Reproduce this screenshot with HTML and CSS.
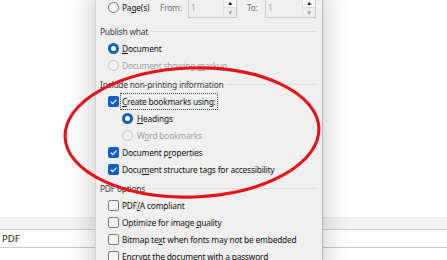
FILE: index.html
```html
<!DOCTYPE html>
<html>
<head>
<meta charset="utf-8">
<link rel="stylesheet" href="styles.css">
</head>
<body>
<div class="page">
  <div class="backdrop">
    <div class="spacer"></div>
    <div class="band"></div>
    <div class="field"><span class="field-text">PDF</span></div>
  </div>

  <div class="dialog">
    <div class="range-row">
      <div class="range-cell">
        <span class="radio"></span><span class="lbl">Pa<u>g</u>e(s)</span>
      </div>
      <span class="range-lbl from">From:</span>
      <div class="spin">
        <span class="spin-val">1</span>
        <span class="spin-btns"><span class="up">&#9650;</span><span class="down">&#9660;</span></span>
      </div>
      <span class="range-lbl to">To:</span>
      <div class="spin wide">
        <span class="spin-val">1</span>
        <span class="spin-btns"><span class="up">&#9650;</span><span class="down">&#9660;</span></span>
      </div>
    </div>

    <div class="group-head first"><span>Publish what</span><span class="rule"></span></div>
    <div class="item"><span class="radio on"></span><span class="lbl"><u>D</u>ocument</span></div>
    <div class="item disabled"><span class="radio off"></span><span class="lbl">Document showing <u>m</u>arkup</span></div>

    <div class="group-head"><span>Include non-printing information</span><span class="rule"></span></div>
    <div class="item"><span class="check on"><svg viewBox="0 0 11 11" width="11" height="11"><path d="M2.6 5.6 L4.6 7.6 L8.5 3.6" fill="none" stroke="#fff" stroke-width="1.1"/></svg></span><span class="lbl focus"><u>C</u>reate bookmarks using:</span></div>
    <div class="item sub"><span class="radio on"></span><span class="lbl"><u>H</u>eadings</span></div>
    <div class="item sub disabled"><span class="radio off"></span><span class="lbl">W<u>o</u>rd bookmarks</span></div>
    <div class="item"><span class="check on"><svg viewBox="0 0 11 11" width="11" height="11"><path d="M2.6 5.6 L4.6 7.6 L8.5 3.6" fill="none" stroke="#fff" stroke-width="1.1"/></svg></span><span class="lbl">Document p<u>r</u>operties</span></div>
    <div class="item"><span class="check on"><svg viewBox="0 0 11 11" width="11" height="11"><path d="M2.6 5.6 L4.6 7.6 L8.5 3.6" fill="none" stroke="#fff" stroke-width="1.1"/></svg></span><span class="lbl">Docu<u>m</u>ent structure tags for accessibility</span></div>

    <div class="group-head"><span>PDF options</span><span class="rule"></span></div>
    <div class="item"><span class="check"></span><span class="lbl">PDF<u>/</u>A compliant</span></div>
    <div class="item"><span class="check"></span><span class="lbl">Optimize for image <u>q</u>uality</span></div>
    <div class="item"><span class="check"></span><span class="lbl">Bitmap te<u>x</u>t when fonts may not be embedded</span></div>
    <div class="item"><span class="check"></span><span class="lbl">E<u>n</u>crypt the document with a password</span></div>
  </div>

  <svg class="annot" width="447" height="260" viewBox="0 0 447 260">
    <ellipse cx="192" cy="132.5" rx="127" ry="64.5" transform="rotate(-2 192 132.5)" fill="none" stroke="#e3131b" stroke-width="3.1"/>
  </svg>
</div>
</body>
</html>
```

FILE: styles.css
```css
* { box-sizing: border-box; }
html, body { margin: 0; padding: 0; background: #fff; }
body {
  font-family: "Noto Sans", "Open Sans", sans-serif;
  font-size: 8.4px;
  letter-spacing: -0.2px;
  color: #111;
}
.page {
  position: relative;
  width: 447px;
  height: 260px;
  overflow: hidden;
  background: #fff;
}
.backdrop { display: flex; flex-direction: column; }
.spacer { height: 217px; }
.band {
  height: 13px;
  background: #f4f4f4;
  border-top: 1px solid #ececec;
  border-bottom: 1px solid #d0d0d0;
}
.field {
  height: 18px;
  background: #fff;
  border-bottom: 1px solid #c6c6c6;
  display: flex;
  align-items: center;
  padding-left: 2px;
}
.field-text { font-size: 9.5px; letter-spacing: 0; color: #222; }

.dialog {
  position: absolute;
  left: 95px;
  top: -4px;
  width: 228px;
  height: 280px;
  background: #f0f0f0;
  border-left: 1px solid #d2d2d2;
  border-right: 1px solid #b4b4b4;
  box-shadow: 0 0 22px 5px rgba(0,0,0,0.17);
  padding-left: 4px;
  padding-right: 6px;
  display: flex;
  flex-direction: column;
}
.range-row {
  height: 22px;
  display: flex;
  align-items: center;
}
.range-cell {
  width: 60px;
  display: flex;
  align-items: center;
  padding-left: 8px;
}
.range-lbl { color: #6e6e6e; }
.from { width: 28px; }
.to { width: 18px; margin-left: 10px; }
.spin {
  width: 49px;
  height: 21px;
  border: 1px solid #cbcbcb;
  background: #f0f0f0;
  display: flex;
  align-items: center;
  justify-content: space-between;
  padding-left: 2px;
  margin-top: 1px;
}
.spin.wide { width: 51px; }
.spin-val { color: #a8a8a8; }
.spin-btns {
  width: 13px;
  height: 19px;
  display: flex;
  flex-direction: column;
  border-left: 1px solid #e4e4e4;
}
.spin-btns span {
  flex: 1;
  display: flex;
  align-items: center;
  justify-content: center;
  font-size: 6px;
  line-height: 1;
}
.up { background: #fbfbfb; color: #111; border-bottom: 1px solid #dcdcdc; }
.down { background: #ededed; color: #9a9a9a; }

.group-head {
  height: 17px;
  margin-top: 2px;
  display: flex;
  align-items: center;
  gap: 3px;
  color: #3a3a3a;
}
.group-head.first { margin-top: 5px; }
.rule { flex: 1; height: 1px; background: #dedede; }

.item {
  height: 17px;
  display: flex;
  align-items: center;
  padding-left: 8px;
}
.item.sub { padding-left: 22px; }
.lbl { margin-left: 3px; white-space: nowrap; }
.item.sub .lbl { margin-left: 4px; }
.disabled .lbl { color: #a3a3a3; }
.lbl u { text-decoration-thickness: 1px; text-underline-offset: 1px; }
.lbl.focus {
  outline: 1px dotted #444;
  outline-offset: 0;
  padding: 0 1px;
  margin-left: 2px;
  line-height: 15px;
}

.radio {
  width: 11px;
  height: 11px;
  border-radius: 50%;
  border: 1px solid #6f6f6f;
  background: #f6f6f6;
  flex: none;
  position: relative;
}
.radio.on {
  border: none;
  background: #0f5fc1;
}
.radio.on::after {
  content: "";
  position: absolute;
  left: 3px;
  top: 3px;
  width: 5px;
  height: 5px;
  border-radius: 50%;
  background: #fff;
}
.radio.off { border-color: #c9c9c9; background: #f0f0f0; }

.check {
  width: 11px;
  height: 11px;
  border-radius: 2px;
  border: 1px solid #7a7a7a;
  background: #f7f7f7;
  flex: none;
  display: flex;
}
.check.on { border: none; background: #0f5fc1; }

.annot {
  position: absolute;
  left: 0;
  top: 0;
  pointer-events: none;
}
```
